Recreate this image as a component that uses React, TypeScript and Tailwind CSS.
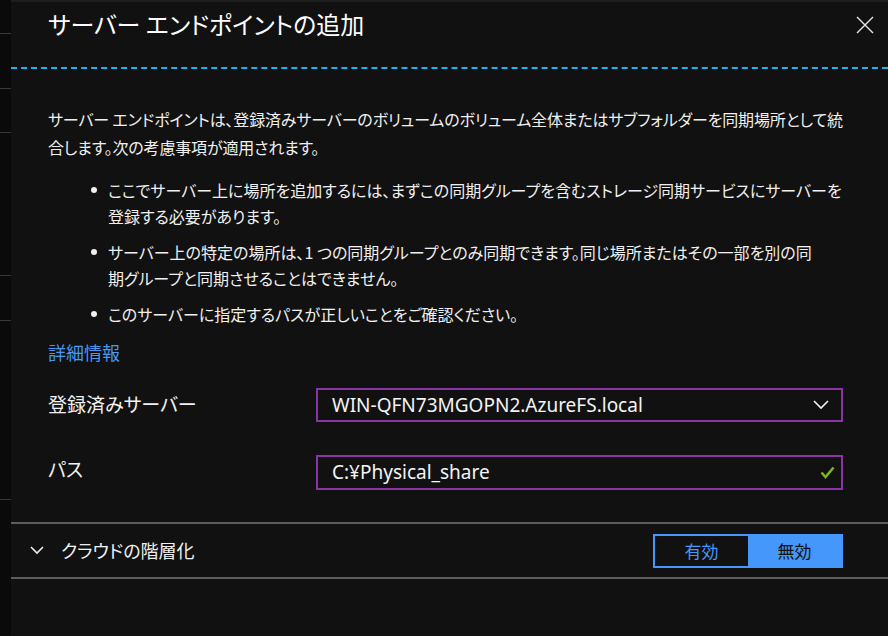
const jp = "font-['Meiryo_UI','Noto_Sans_CJK_JP',sans-serif] [font-feature-settings:'palt']";

const bullets = [
  ["ここでサーバー上に場所を追加するには、まずこの同期グループを含むストレージ同期サービスにサーバーを", "登録する必要があります。"],
  ["サーバー上の特定の場所は、1 つの同期グループとのみ同期できます。同じ場所またはその一部を別の同", "期グループと同期させることはできません。"],
  ["このサーバーに指定するパスが正しいことをご確認ください。"],
];

const App = () => {
  return (
    <div className={`w-[888px] h-[636px] bg-[#111111] flex overflow-hidden ${jp}`}>
      {/* left edge of the blade behind */}
      <div className="w-[11px] h-full bg-[#0a0a0a] flex flex-col shrink-0">
        <div className="h-[34px] border-b border-[#3a3a3a]" />
        <div className="h-[55px] border-b border-[#3a3a3a]" />
        <div className="h-[44px] border-b border-[#3a3a3a]" />
        <div className="h-[143px] border-b border-[#3a3a3a]" />
        <div className="h-[45px] border-b border-[#3a3a3a]" />
        <div className="h-[179px] border-b border-[#3a3a3a]" />
      </div>

      <div className="flex-1 min-w-0 flex flex-col">
        <div className="h-[2px] bg-[#1e1e1e]" />
        <div className="h-[47px] flex items-center justify-between pl-[37px] pr-[12px]">
          <h1 className="text-[24px] text-white leading-none pb-[3px]">サーバー エンドポイントの追加</h1>
          <svg width="20" height="20" viewBox="0 0 20 20" className="mr-[1px] mb-[2px]">
            <path d="M2 2 L18 18 M18 2 L2 18" stroke="#e6e6e6" strokeWidth="1.4" fill="none" />
          </svg>
        </div>
        <div className="mt-[18px] border-t-2 border-dashed border-[#19b5f0]" />

        <div className="pl-[37px] pr-[45px] text-[#f0f0f0] text-[16px]">
          <p className="mt-[36px] leading-[28px] whitespace-nowrap tracking-[-0.15px]">
            サーバー エンドポイントは、登録済みサーバーのボリュームのボリューム全体またはサブフォルダーを同期場所として統
            <br />
            合します。次の考慮事項が適用されます。
          </p>
          <ul className="mt-[16px] flex flex-col gap-[10px] pl-[43px]">
            {bullets.map((lines, i) => (
              <li key={i} className="flex leading-[26px] whitespace-nowrap">
                <span className="w-[17px] shrink-0 flex pt-[10px]">
                  <span className="w-[6px] h-[6px] rounded-full bg-[#f0f0f0]" />
                </span>
                <span>
                  {lines.map((l, j) => (
                    <span key={j} className="block">{l}</span>
                  ))}
                </span>
              </li>
            ))}
          </ul>
          <a className="block mt-[12px] text-[18px] leading-[26px] text-[#4a98f0]">詳細情報</a>

          <div className="mt-[23px] flex items-center">
            <label className="w-[268px] text-[19px] pb-[2px]">登録済みサーバー</label>
            <div className="flex-1 h-[34px] border-2 border-[#8b34a6] flex items-center justify-between pl-[14px] pr-[12px]">
              <span className="font-['Noto_Sans',sans-serif] text-[19px] text-[#f4f4f4]">WIN-QFN73MGOPN2.AzureFS.local</span>
              <svg width="16" height="10" viewBox="0 0 16 10">
                <path d="M1 1 L8 8 L15 1" stroke="#f0f0f0" strokeWidth="1.6" fill="none" />
              </svg>
            </div>
          </div>

          <div className="mt-[33px] flex items-center">
            <label className="w-[268px] text-[19px] pb-[6px]">パス</label>
            <div className="flex-1 h-[35px] border-2 border-[#8b34a6] flex items-center justify-between pl-[14px] pr-[6px]">
              <span className="font-['Noto_Sans',sans-serif] text-[19px] text-[#f4f4f4]">C:¥Physical_share</span>
              <svg width="15" height="13" viewBox="0 0 15 13">
                <path d="M1.5 6.5 L5.5 11 L13.5 1.5" stroke="#7cb518" strokeWidth="2.6" fill="none" />
              </svg>
            </div>
          </div>
        </div>

        <div className="mt-[32px] border-t-2 border-[#5c5c5c]" />
        <div className="h-[53px] flex items-center pl-[19px] pr-[45px]">
          <svg width="14" height="9" viewBox="0 0 14 9">
            <path d="M1 1 L7 7 L13 1" stroke="#eeeeee" strokeWidth="1.6" fill="none" />
          </svg>
          <span className="ml-[17px] text-[18px] text-[#f0f0f0]">クラウドの階層化</span>
          <div className="ml-auto w-[190px] h-[34px] border-2 border-[#4697fb] flex text-[17px]">
            <div className="flex-1 flex items-center justify-center text-[#4697fb] bg-[#111111]">有効</div>
            <div className="flex-1 flex items-center justify-center bg-[#4697fb] text-[#111111]">無効</div>
          </div>
        </div>
        <div className="border-t-2 border-[#5c5c5c]" />
      </div>
    </div>
  );
};

export default App;
